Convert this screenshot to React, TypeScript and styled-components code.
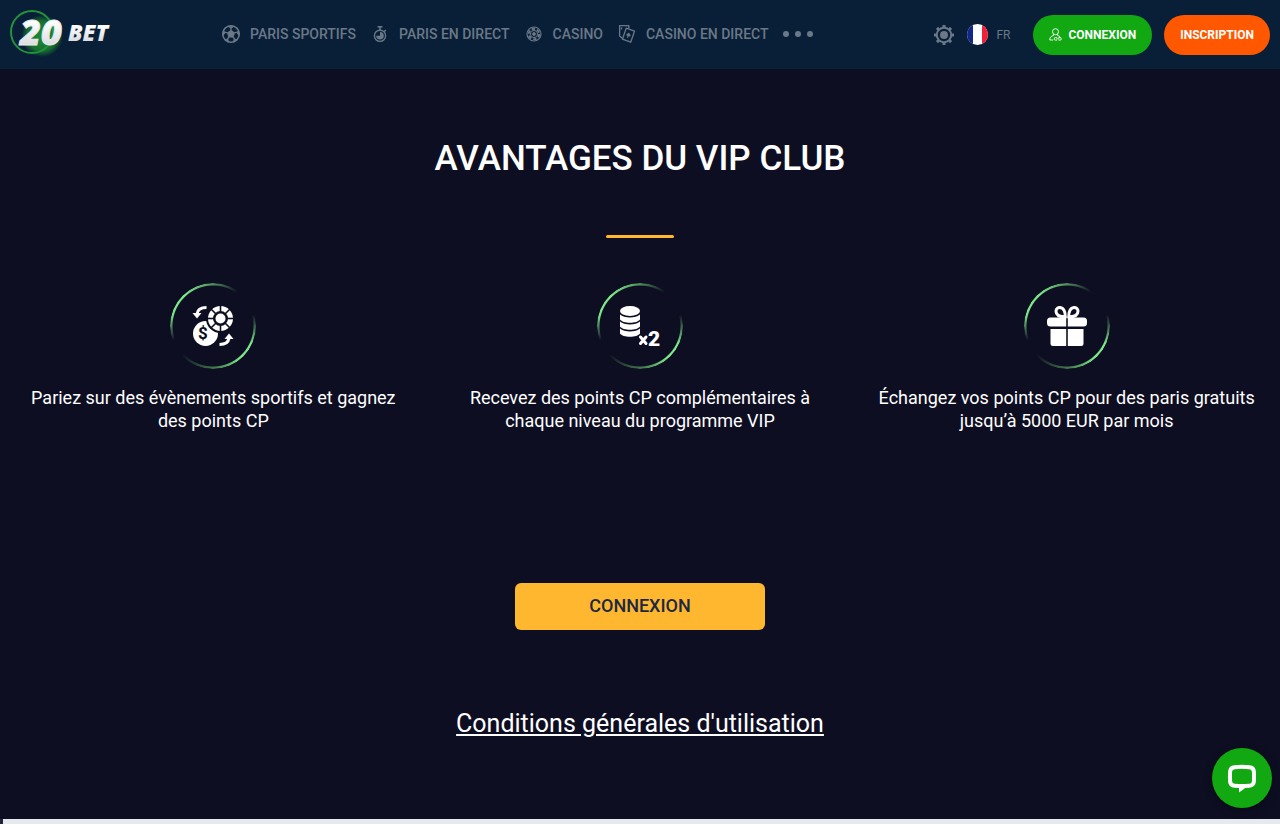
import React from "react";
import styled, { createGlobalStyle } from "styled-components";

const GlobalStyle = createGlobalStyle`
  *, *::before, *::after { box-sizing: border-box; }
  body {
    margin: 0;
    background: #0e0e23;
    color: #ffffff;
    font-family: Roboto, "Liberation Sans", sans-serif;
  }
  h1, p, ul { margin: 0; padding: 0; }
  ul { list-style: none; }
  a { color: inherit; text-decoration: none; }
  button { font-family: inherit; cursor: pointer; border: 0; }
  svg { display: block; flex-shrink: 0; overflow: visible; }
`;

const Header = styled.header`
  display: flex;
  align-items: center;
  height: 69px;
  padding: 0 10px;
  background: #081f37;
  color: #6b7887;
`;

const LogoLink = styled.a`
  flex: none;
  width: 104px;
`;

const Nav = styled.nav`
  flex: 1;
  margin-left: 107px;
  padding-bottom: 2px;
`;

const NavList = styled.ul`
  display: flex;
  align-items: center;
  gap: 14px;
`;

const NavLink = styled.a`
  display: flex;
  align-items: center;
  gap: 9px;
  font-size: 14px;
  font-weight: 500;
  line-height: 20px;
  text-transform: uppercase;
  white-space: nowrap;
`;

const MoreButton = styled.button`
  display: flex;
  gap: 6px;
  padding: 6px 0;
  background: none;
`;

const Dot = styled.span`
  width: 6px;
  height: 6px;
  border-radius: 50%;
  background: #6b7887;
`;

const Tools = styled.div`
  display: flex;
  align-items: center;
  gap: 13px;
`;

const ToolButton = styled.button`
  display: flex;
  align-items: center;
  gap: 8px;
  padding: 0;
  background: none;
  color: #6b7887;
  font-size: 12px;
  line-height: 20px;
`;

const PillGroup = styled.div`
  display: flex;
  gap: 12px;
  margin-left: 10px;
`;

const Pill = styled.button<{ $color: string }>`
  display: flex;
  align-items: center;
  gap: 6px;
  height: 40px;
  padding: 0 16px;
  border-radius: 20px;
  background: ${(p) => p.$color};
  color: #ffffff;
  font-size: 12px;
  font-weight: 700;
  text-transform: uppercase;
`;

const Main = styled.main`
  display: flex;
  flex-direction: column;
  align-items: center;
  padding: 70px 0 80px;
`;

const Title = styled.h1`
  font-size: 35px;
  font-weight: 500;
  line-height: 40px;
  text-align: center;
  text-transform: uppercase;
`;

const Divider = styled.div`
  width: 68px;
  height: 3px;
  margin-top: 56px;
  border-radius: 2px;
  background: #ffb72f;
`;

const Benefits = styled.ul`
  display: grid;
  grid-template-columns: repeat(3, 1fr);
  width: 100%;
  margin-top: 45px;
`;

const Benefit = styled.li`
  display: flex;
  flex-direction: column;
  align-items: center;
  gap: 17px;
  padding: 0 24px;
`;

const Ring = styled.div`
  display: grid;
  place-items: center;
  width: 86px;
  height: 86px;
  position: relative;

  &::before {
    content: "";
    position: absolute;
    inset: 0;
    border-radius: 50%;
    background: conic-gradient(
      #4f8f5a 0deg,
      #7be68700 36deg,
      #7be68700 74deg,
      #7be687 115deg,
      #7be687 140deg,
      #47804f 175deg,
      #7be68700 228deg,
      #7be68700 250deg,
      #7be687 285deg,
      #7be687 320deg,
      #4f8f5a 360deg
    );
    mask: radial-gradient(circle closest-side, transparent 40px, #000 41px);
  }
`;

const BenefitText = styled.p`
  font-size: 18px;
  line-height: 23px;
  text-align: center;
`;

const LoginButton = styled.button`
  width: 250px;
  height: 47px;
  margin-top: 151px;
  padding: 0 0 2px;
  border-radius: 6px;
  background: #ffb72f;
  color: #1b2844;
  font-size: 18px;
  font-weight: 500;
  text-transform: uppercase;
`;

const TermsLink = styled.a`
  margin-top: 78px;
  font-size: 25px;
  line-height: 31px;
  && { text-decoration: underline; }
`;

const NextSection = styled.footer`
  height: 5px;
  border-left: 3px solid #23233a;
  background: #e6e9ed;
`;

const ChatButton = styled.button`
  position: fixed;
  right: 8px;
  bottom: 16px;
  display: grid;
  place-items: center;
  width: 60px;
  height: 60px;
  padding: 0;
  border-radius: 50%;
  background: #11a811;
  box-shadow: 0 2px 8px rgba(0, 0, 0, 0.35);
`;

const Logo = () => (
  <svg width="104" height="50" viewBox="0 0 104 50" role="img" aria-label="20Bet">
    <defs>
      <linearGradient id="logoText" x1="0" y1="0" x2="0" y2="1">
        <stop offset="0.3" stopColor="#ffffff" />
        <stop offset="1" stopColor="#c9ccd2" />
      </linearGradient>
      <radialGradient id="logoGlow">
        <stop offset="0" stopColor="#1c8a35" />
        <stop offset="0.7" stopColor="#17702f" />
        <stop offset="1" stopColor="#17702f" stopOpacity="0" />
      </radialGradient>
    </defs>
    <circle cx="32" cy="26" r="21" fill="url(#logoGlow)" />
    <circle cx="22" cy="22" r="21" fill="none" stroke="#24913c" strokeWidth="2" />
    <text x="10" y="35" fontFamily="Open Sans" fontSize="36" fontWeight="800" fontStyle="italic" fill="url(#logoText)" stroke="#e8eaee" strokeWidth="1">20</text>
    <text x="58" y="31" fontFamily="Open Sans" fontSize="23" fontWeight="800" fontStyle="italic" fill="url(#logoText)">BET</text>
  </svg>
);

const BallIcon = () => (
  <svg width="20" height="20" viewBox="0 0 20 20" fill="none" stroke="currentColor">
    <circle cx="10" cy="10" r="8.300" strokeWidth="1.500" />
    <path d="M10 6.600l3.300 2.400-1.300 3.900H8L6.700 9z" fill="currentColor" strokeWidth="1.200" />
    <path d="M10 6.600V4M13.300 9l2.500-.8M12 12.900l1.500 2.100M8 12.900l-1.500 2.100M6.700 9l-2.500-.8" strokeWidth="1.300" />
    <path d="M7 2.200L10 4.300l3-2.100zM17.800 7l-2.200 1.400 2.500 3zM15.800 15.500l-2.500-.4-.8 2.600zM4.200 15.500l2.500-.4.800 2.600zM2.200 7l2.200 1.400-2.500 3z" fill="currentColor" strokeWidth="1" />
  </svg>
);

const StopwatchIcon = () => (
  <svg width="20" height="20" viewBox="0 0 20 20" fill="none" stroke="currentColor">
    <circle cx="10" cy="11.800" r="5.600" strokeWidth="1.400" />
    <path d="M7.500 2.800h5M10 3v3.500M14.300 7.500l1.500-1.400" strokeWidth="1.600" />
    <path d="M10 11.800V8A3.800 3.800 0 1 1 6.200 11.800z" fill="currentColor" stroke="none" transform="translate(0 0)" />
  </svg>
);

const ChipIcon = () => (
  <svg width="20" height="20" viewBox="0 0 20 20" fill="none" stroke="currentColor">
    <circle cx="10" cy="10" r="7" strokeWidth="1.200" />
    <circle cx="10" cy="10" r="5.200" strokeWidth="2" strokeDasharray="3.400 2" />
    <circle cx="10" cy="10" r="3.600" strokeWidth="1" />
    <path d="M10 7.500l2.300 2.500-2.300 2.500L7.700 10z" fill="currentColor" stroke="none" />
  </svg>
);

const CardsIcon = () => (
  <svg width="20" height="20" viewBox="0 0 20 20" fill="none" stroke="currentColor" strokeWidth="1.300" strokeLinejoin="round">
    <path d="M9.200 4.200l8.300 3-3.800 11-8.300-3z" />
    <path d="M5.300 14.200L2.600 12V1.700h9.200v2.700M4.500 3.500v2" />
    <path d="M11.900 8.500c.3 1.200 2 2 1.600 3.300-.3.800-1.300.8-1.700.3l-.8 1.800-1-.4.500-1.700c-.6.200-1.300-.3-1.100-1.100.3-1.100 1.900-1.100 2.500-2.200z" fill="currentColor" stroke="none" />
  </svg>
);

const GearIcon = () => (
  <svg width="20" height="20" viewBox="0 0 20 20" fill="none" stroke="currentColor">
    <circle cx="10" cy="10" r="7.200" strokeWidth="2" />
    <circle cx="10" cy="10" r="4" fill="currentColor" stroke="none" />
    {[0, 45, 90, 135, 180, 225, 270, 315].map((angle) => (
      <path key={angle} d="M10 0v3" strokeWidth="3" transform={`rotate(${angle} 10 10)`} />
    ))}
  </svg>
);

const FlagIcon = () => (
  <svg width="21" height="21" viewBox="0 0 21 21">
    <clipPath id="flagClip"><circle cx="10.500" cy="10.500" r="10.500" /></clipPath>
    <g clipPath="url(#flagClip)">
      <path d="M0 0h21v21H0z" fill="#ffffff" />
      <path d="M0 0h6v21H0z" fill="#10268a" />
      <path d="M15 0h6v21h-6z" fill="#f41f36" />
    </g>
  </svg>
);

const UserIcon = () => (
  <svg width="13" height="13" viewBox="0 0 13 13" fill="none" stroke="currentColor" strokeWidth="0.900">
    <circle cx="6.500" cy="3.700" r="3" />
    <path d="M4.500 6.300v1.200C2 8.300.8 9 .8 12h3.400M8.500 6.300v1.200c1 .3 1.800.6 2.500 1.200" />
    <path d="M8 9.500H6.500a1.300 1.300 0 0 0 0 2.600H8M9.500 9.500H11a1.300 1.300 0 0 1 0 2.600H9.500M7.300 10.800h3" />
  </svg>
);

const ExchangeIcon = () => (
  <svg width="42" height="42" viewBox="0 0 42 42" fill="none" stroke="#ffffff">
    <circle cx="13.500" cy="28.500" r="12.500" fill="#ffffff" stroke="none" />
    <circle cx="28.500" cy="13.500" r="14.500" fill="#0e0e23" stroke="none" />
    <circle cx="28.500" cy="13.500" r="10" strokeWidth="5" />
    <g stroke="#0e0e23" strokeWidth="1.600">
      {[0, 45, 90, 135, 180, 225, 270, 315].map((angle) => (
        <path key={angle} d="M28.500 0v7.500" transform={`rotate(${angle} 28.500 13.500)`} />
      ))}
    </g>
    <circle cx="28.500" cy="13.500" r="5" fill="#ffffff" stroke="none" />
    <text x="11" y="34" textAnchor="middle" fontFamily="Roboto" fontSize="17" fontWeight="700" fill="#0e0e23" stroke="none">$</text>
    <path d="M14.500 2.500C9 2.500 5.500 5 5 9" strokeWidth="3" />
    <path d="M.5 8h9L5 13.500z" fill="#ffffff" stroke="none" />
    <path d="M27.500 39.500c5.500 0 9-2.500 9.500-6.500" strokeWidth="3" />
    <path d="M32.500 34h9L37 28.500z" fill="#ffffff" stroke="none" />
  </svg>
);

const CoinsIcon = () => (
  <svg width="42" height="42" viewBox="0 0 42 42" fill="#ffffff">
    <ellipse cx="11" cy="6" rx="10" ry="5" />
    {[0, 7, 14].map((dy) => (
      <path key={dy} d="M1 9.500c2 2 6 3 10 3s8-1 10-3v5c-1.500 2-5.500 3.300-10 3.300S2.500 16.500 1 14.500z" transform={`translate(0 ${dy})`} />
    ))}
    <path d="M21.500 32l5.500 6.500M27 32l-5.500 6.500" stroke="#ffffff" strokeWidth="3" strokeLinecap="round" />
    <text x="29" y="41" fontFamily="Roboto" fontSize="21" fontWeight="900">2</text>
  </svg>
);

const GiftIcon = () => (
  <svg width="42" height="42" viewBox="0 0 42 42" fill="#ffffff">
    <path d="M4.500 12.500h15.700v9H4.500a3.500 3.500 0 0 1-3.500-3.500v-2a3.500 3.500 0 0 1 3.500-3.500zM21.800 12.500h15.700A3.500 3.500 0 0 1 41 16v2a3.500 3.500 0 0 1-3.500 3.500H21.800z" />
    <path d="M4.500 24h15.700v17H7a2.500 2.500 0 0 1-2.500-2.500zM21.800 24h15.700v14.500A2.500 2.500 0 0 1 35 41H21.800z" />
    <path d="M19.300 11.800C13 11.800 10 9.500 10 6.200a3.700 3.700 0 0 1 4.200-3.700c3.300.5 5.100 4 5.100 9.300zM22.700 11.800c6.300 0 9.300-2.300 9.300-5.600a3.700 3.700 0 0 0-4.200-3.700c-3.300.5-5.100 4-5.100 9.300z" fill="none" stroke="#ffffff" strokeWidth="3" />
  </svg>
);

const ChatIcon = () => (
  <svg width="28" height="28" viewBox="0 0 28 28">
    <path d="M6.500 3.200C11 2.800 17 2.800 21.500 3.200c2.800.3 4.200 1.700 4.400 4.300.2 3.300.2 6.700 0 10-.2 2.600-1.600 4-4.400 4.200L17 22h-6l-4.500-.3c-2.800-.2-4.200-1.600-4.400-4.200-.2-3.300-.2-6.700 0-10 .2-2.600 1.600-4 4.400-4.300z" fill="none" stroke="#ffffff" strokeWidth="4" />
    <path d="M11 21v7.500l7-5z" fill="#ffffff" />
  </svg>
);

const navItems = [
  { label: "Paris sportifs", icon: <BallIcon /> },
  { label: "Paris en direct", icon: <StopwatchIcon /> },
  { label: "Casino", icon: <ChipIcon /> },
  { label: "Casino en direct", icon: <CardsIcon /> },
];

const benefits = [
  { text: "Pariez sur des évènements sportifs et gagnez des points CP", icon: <ExchangeIcon /> },
  { text: "Recevez des points CP complémentaires à chaque niveau du programme VIP", icon: <CoinsIcon /> },
  { text: "Échangez vos points CP pour des paris gratuits jusqu’à 5000 EUR par mois", icon: <GiftIcon /> },
];

export default function App() {
  return (
    <>
      <GlobalStyle />
      <Header>
        <LogoLink href="#"><Logo /></LogoLink>
        <Nav>
          <NavList>
            {navItems.map((item) => (
              <li key={item.label}>
                <NavLink href="#">{item.icon}{item.label}</NavLink>
              </li>
            ))}
            <li>
              <MoreButton aria-label="Plus"><Dot /><Dot /><Dot /></MoreButton>
            </li>
          </NavList>
        </Nav>
        <Tools>
          <ToolButton aria-label="Paramètres"><GearIcon /></ToolButton>
          <ToolButton><FlagIcon />FR</ToolButton>
          <PillGroup>
            <Pill $color="#11a811"><UserIcon />Connexion</Pill>
            <Pill $color="#ff5800">Inscription</Pill>
          </PillGroup>
        </Tools>
      </Header>
      <Main>
        <Title>Avantages du VIP Club</Title>
        <Divider />
        <Benefits>
          {benefits.map((item) => (
            <Benefit key={item.text}>
              <Ring>{item.icon}</Ring>
              <BenefitText>{item.text}</BenefitText>
            </Benefit>
          ))}
        </Benefits>
        <LoginButton>Connexion</LoginButton>
        <TermsLink href="#">Conditions générales d'utilisation</TermsLink>
      </Main>
      <NextSection />
      <ChatButton aria-label="Chat"><ChatIcon /></ChatButton>
    </>
  );
}
